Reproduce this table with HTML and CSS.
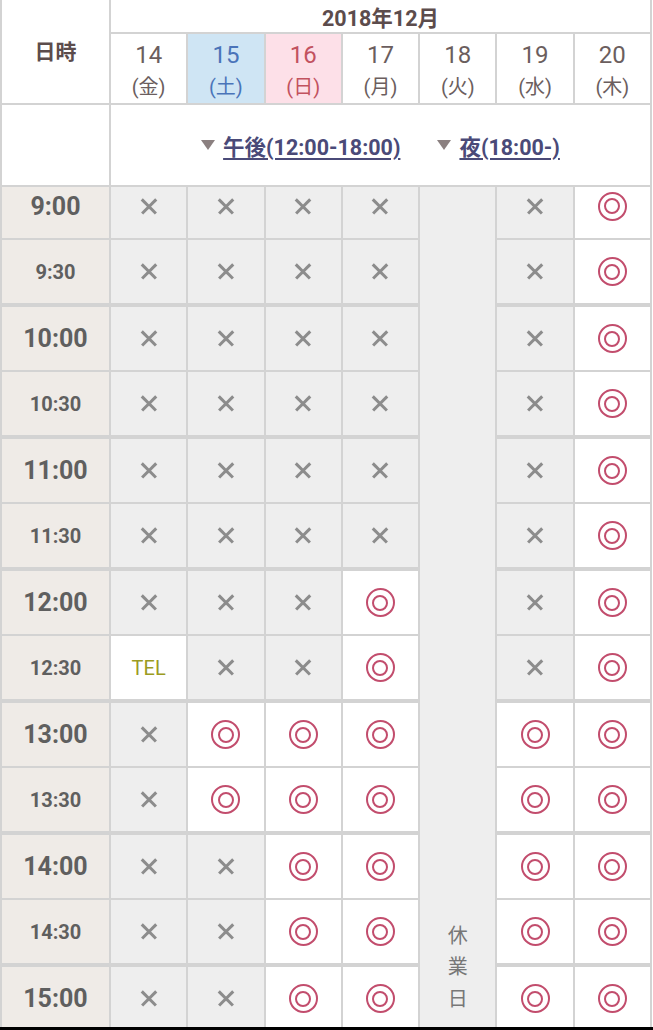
FILE: index.html
```html
<!DOCTYPE html>
<html lang="ja">
<head>
<meta charset="utf-8">
<title>予約カレンダー</title>
<link rel="stylesheet" href="styles.css">
</head>
<body>
<div class="sheet">
  <div class="corner">日時</div>
  <div class="month">2018年12月</div>
  <div class="day"><span>14</span><span>(金)</span></div>
  <div class="day sat"><span>15</span><span>(土)</span></div>
  <div class="day sun"><span>16</span><span>(日)</span></div>
  <div class="day"><span>17</span><span>(月)</span></div>
  <div class="day"><span>18</span><span>(火)</span></div>
  <div class="day"><span>19</span><span>(水)</span></div>
  <div class="day"><span>20</span><span>(木)</span></div>
  <div class="blank"></div>
  <div class="periods">
    <a class="period" href="#pm"><span class="tri"></span><span class="plabel">午後(12:00-18:00)</span></a>
    <a class="period" href="#night"><span class="tri"></span><span class="plabel">夜(18:00-)</span></a>
  </div>
  <div class="closed"><span>休</span><span>業</span><span>日</span></div>

  <div class="row top">
    <div class="time hr">9:00</div>
    <div class="cell no"><i class="x"></i></div><div class="cell no"><i class="x"></i></div><div class="cell no"><i class="x"></i></div><div class="cell no"><i class="x"></i></div>
    <div class="cell no"><i class="x"></i></div><div class="cell ok"><i class="maru"></i></div>
  </div>
  <div class="row">
    <div class="time">9:30</div>
    <div class="cell no"><i class="x"></i></div><div class="cell no"><i class="x"></i></div><div class="cell no"><i class="x"></i></div><div class="cell no"><i class="x"></i></div>
    <div class="cell no"><i class="x"></i></div><div class="cell ok"><i class="maru"></i></div>
  </div>
  <div class="row hour">
    <div class="time hr">10:00</div>
    <div class="cell no"><i class="x"></i></div><div class="cell no"><i class="x"></i></div><div class="cell no"><i class="x"></i></div><div class="cell no"><i class="x"></i></div>
    <div class="cell no"><i class="x"></i></div><div class="cell ok"><i class="maru"></i></div>
  </div>
  <div class="row">
    <div class="time">10:30</div>
    <div class="cell no"><i class="x"></i></div><div class="cell no"><i class="x"></i></div><div class="cell no"><i class="x"></i></div><div class="cell no"><i class="x"></i></div>
    <div class="cell no"><i class="x"></i></div><div class="cell ok"><i class="maru"></i></div>
  </div>
  <div class="row hour">
    <div class="time hr">11:00</div>
    <div class="cell no"><i class="x"></i></div><div class="cell no"><i class="x"></i></div><div class="cell no"><i class="x"></i></div><div class="cell no"><i class="x"></i></div>
    <div class="cell no"><i class="x"></i></div><div class="cell ok"><i class="maru"></i></div>
  </div>
  <div class="row">
    <div class="time">11:30</div>
    <div class="cell no"><i class="x"></i></div><div class="cell no"><i class="x"></i></div><div class="cell no"><i class="x"></i></div><div class="cell no"><i class="x"></i></div>
    <div class="cell no"><i class="x"></i></div><div class="cell ok"><i class="maru"></i></div>
  </div>
  <div class="row hour">
    <div class="time hr">12:00</div>
    <div class="cell no"><i class="x"></i></div><div class="cell no"><i class="x"></i></div><div class="cell no"><i class="x"></i></div><div class="cell ok"><i class="maru"></i></div>
    <div class="cell no"><i class="x"></i></div><div class="cell ok"><i class="maru"></i></div>
  </div>
  <div class="row">
    <div class="time">12:30</div>
    <div class="cell tel">TEL</div><div class="cell no"><i class="x"></i></div><div class="cell no"><i class="x"></i></div><div class="cell ok"><i class="maru"></i></div>
    <div class="cell no"><i class="x"></i></div><div class="cell ok"><i class="maru"></i></div>
  </div>
  <div class="row hour">
    <div class="time hr">13:00</div>
    <div class="cell no"><i class="x"></i></div><div class="cell ok"><i class="maru"></i></div><div class="cell ok"><i class="maru"></i></div><div class="cell ok"><i class="maru"></i></div>
    <div class="cell ok"><i class="maru"></i></div><div class="cell ok"><i class="maru"></i></div>
  </div>
  <div class="row">
    <div class="time">13:30</div>
    <div class="cell no"><i class="x"></i></div><div class="cell ok"><i class="maru"></i></div><div class="cell ok"><i class="maru"></i></div><div class="cell ok"><i class="maru"></i></div>
    <div class="cell ok"><i class="maru"></i></div><div class="cell ok"><i class="maru"></i></div>
  </div>
  <div class="row hour">
    <div class="time hr">14:00</div>
    <div class="cell no"><i class="x"></i></div><div class="cell no"><i class="x"></i></div><div class="cell ok"><i class="maru"></i></div><div class="cell ok"><i class="maru"></i></div>
    <div class="cell ok"><i class="maru"></i></div><div class="cell ok"><i class="maru"></i></div>
  </div>
  <div class="row">
    <div class="time">14:30</div>
    <div class="cell no"><i class="x"></i></div><div class="cell no"><i class="x"></i></div><div class="cell ok"><i class="maru"></i></div><div class="cell ok"><i class="maru"></i></div>
    <div class="cell ok"><i class="maru"></i></div><div class="cell ok"><i class="maru"></i></div>
  </div>
  <div class="row hour">
    <div class="time hr">15:00</div>
    <div class="cell no"><i class="x"></i></div><div class="cell no"><i class="x"></i></div><div class="cell ok"><i class="maru"></i></div><div class="cell ok"><i class="maru"></i></div>
    <div class="cell ok"><i class="maru"></i></div><div class="cell ok"><i class="maru"></i></div>
  </div>
</div>
<div class="navbar"></div>
</body>
</html>
```

FILE: styles.css
```css
html, body {
  margin: 0;
  padding: 0;
  background: #ffffff;
  overflow: hidden;
}

.sheet {
  display: grid;
  width: 652px;
  box-sizing: border-box;
  padding: 0 2px;
  gap: 2px;
  background: #d3d3d3;
  grid-template-columns: 107px repeat(7, 1fr);
  grid-template-rows: 32px 69px 80px 51px 63px repeat(5, 65px 63px) 65px;
  font-family: Roboto, "Noto Sans CJK JP", sans-serif;
  color: #6b5e5e;
}

.corner {
  grid-row: span 2;
  background: #fff;
  display: flex;
  align-items: center;
  justify-content: center;
  padding-bottom: 3px;
  box-sizing: border-box;
  font-size: 21px;
  font-weight: 700;
  color: #5c4c4c;
}

.month {
  grid-column: span 7;
  background: #fff;
  display: flex;
  align-items: center;
  justify-content: center;
  font-size: 21.5px;
  font-weight: 700;
  color: #5c4c4c;
}

.day {
  background: #fff;
  display: flex;
  flex-direction: column;
  align-items: center;
  padding-top: 5px;
  box-sizing: border-box;
  line-height: 32px;
  color: #6b5e5e;
}
.day span:first-child { font-size: 24px; }
.day span:last-child { font-size: 20px; }
.day.sat { background: #cfe5f4; color: #4a74b9; }
.day.sun { background: #fde0e8; color: #c2525f; }

.blank { background: #fff; }

.periods {
  grid-column: span 7;
  background: #fff;
  display: flex;
  align-items: center;
  justify-content: center;
  gap: 37px;
}

.period {
  display: flex;
  align-items: center;
  gap: 8px;
  color: #4a4a78;
  text-decoration: none;
}
.plabel {
  font-size: 21.5px;
  font-weight: 700;
  text-decoration: underline;
  text-decoration-thickness: 2px;
  text-underline-offset: 3px;
}
.tri {
  width: 0;
  height: 0;
  border-left: 7px solid transparent;
  border-right: 7px solid transparent;
  border-top: 10px solid #8b8080;
}

.closed {
  grid-column: 6;
  grid-row: 4 / span 13;
  background: #eeeeee;
  display: flex;
  flex-direction: column;
  justify-content: flex-end;
  align-items: center;
  padding-bottom: 15px;
  font-size: 20px;
  line-height: 31.5px;
  color: #777;
}

.row { display: contents; }
.row.hour > div { border-top: 2px solid #d3d3d3; }
.row.top > div { padding-bottom: 13px; }
.row > div { box-sizing: border-box; }

.time {
  background: #efebe7;
  display: flex;
  align-items: center;
  justify-content: center;
  font-size: 20px;
  font-weight: 700;
  color: #5f5f5f;
}
.time.hr { font-size: 25px; }

.cell {
  display: flex;
  align-items: center;
  justify-content: center;
}
.cell.no { background: #eeeeee; }
.cell.ok, .cell.tel { background: #ffffff; }
.cell.tel {
  font-size: 20px;
  color: #9b9b22;
}

.x {
  position: relative;
  width: 20px;
  height: 20px;
}
.x::before, .x::after {
  content: "";
  position: absolute;
  left: 0;
  top: 8.75px;
  width: 20px;
  height: 2.5px;
  background: #8c8c8c;
  transform: rotate(45deg);
}
.x::after { transform: rotate(-45deg); }

.maru {
  width: 29px;
  height: 29px;
  box-sizing: border-box;
  border: 2px solid #c24d6d;
  border-radius: 50%;
  display: flex;
  align-items: center;
  justify-content: center;
}
.maru::after {
  content: "";
  width: 16px;
  height: 16px;
  box-sizing: border-box;
  border: 2px solid #c24d6d;
  border-radius: 50%;
}

.navbar {
  position: fixed;
  left: 0;
  right: 0;
  bottom: 0;
  height: 3px;
  background: #000;
}
```
